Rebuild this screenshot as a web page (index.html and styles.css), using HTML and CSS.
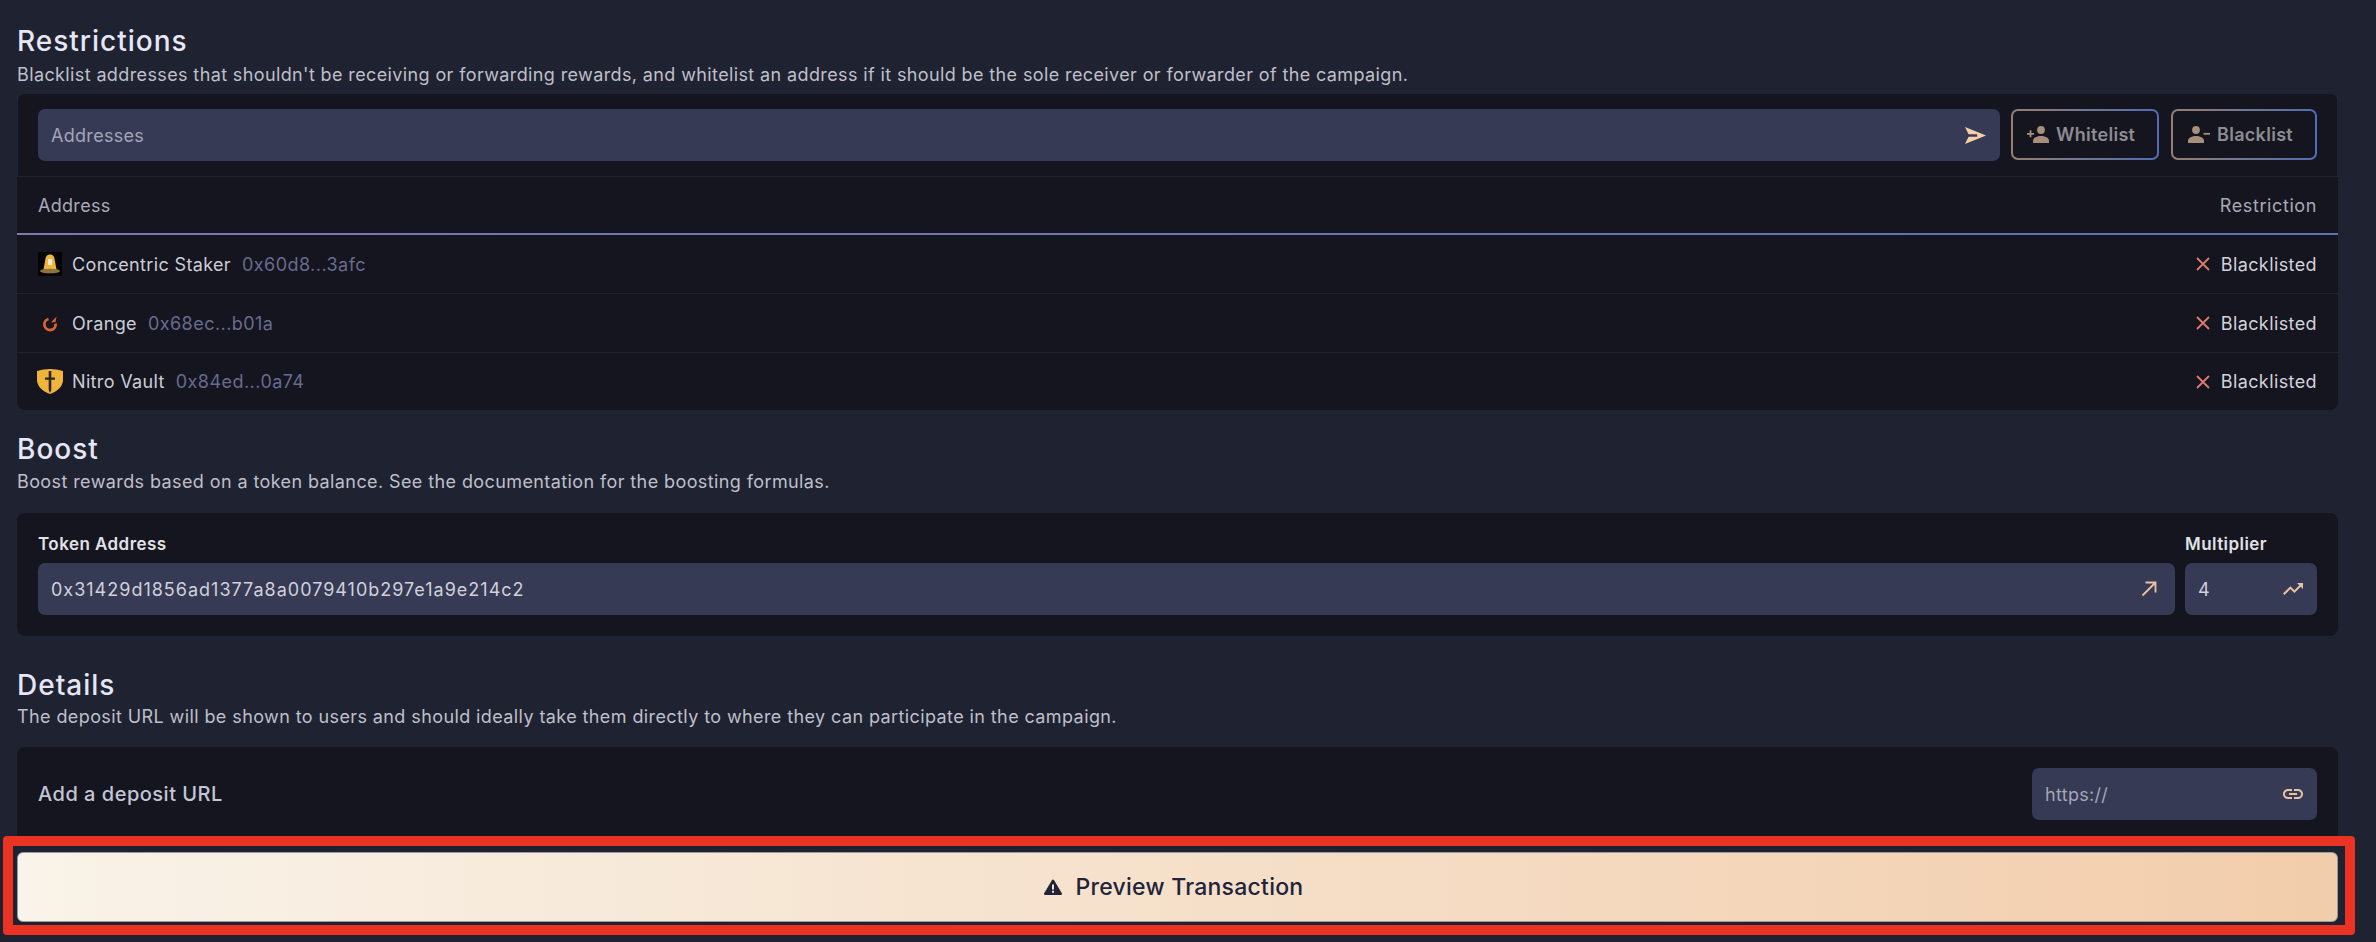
FILE: index.html
```html
<!DOCTYPE html>
<html lang="en">
<head>
  <meta charset="UTF-8">
  <title>Campaign restrictions</title>
  <link rel="stylesheet" href="styles.css">
</head>
<body>
  <main class="page">

    <!-- Restrictions -->
    <h2 class="section-title">Restrictions</h2>
    <p class="section-text tight">Blacklist addresses that shouldn't be receiving or forwarding rewards, and whitelist an address if it should be the sole receiver or forwarder of the campaign.</p>
    <section class="card restrictions">
      <div class="toolbar">
        <div class="field grow">
          <span class="placeholder">Addresses</span>
          <svg class="icon-send" viewBox="0 0 21 17"><path d="M0 0l21 8.500L0 17l3.600-7.300h8.600V7.300H3.600z"/></svg>
        </div>
        <button class="btn-outline whitelist">
          <svg class="icon-user" viewBox="0 0 22 17"><circle cx="14" cy="4" r="3.900"/><path d="M6 17v-2.200C6 11.600 10.500 10 14 10s8 1.600 8 4.800V17z"/><path d="M0 6.900h7v1.800H0zM2.600 4.300h1.800v7H2.600z"/></svg>
          Whitelist
        </button>
        <button class="btn-outline blacklist">
          <svg class="icon-user" viewBox="0 0 22 17"><circle cx="8" cy="4" r="3.900"/><path d="M0 17v-2.200C0 11.600 4.500 10 8 10s8 1.600 8 4.800V17z"/><path d="M15.500 6.900H22v1.800h-6.500z"/></svg>
          Blacklist
        </button>
      </div>
      <div class="table-head">
        <span>Address</span>
        <span class="head-right">Restriction</span>
      </div>
      <div class="table-row">
        <div class="who">
          <svg class="logo" viewBox="0 0 24 24"><rect width="24" height="24" fill="#050505"/><path d="M12 2.500c3.500 0 4.500 2.500 5 7l1.500 8h-13l1.500-8c.5-4.500 1.500-7 5-7z" fill="#f0b440"/><ellipse cx="12" cy="19" rx="10" ry="2.300" fill="#8a7440"/><path d="M10 7h4v6h-4z" fill="#fbeec4"/></svg>
          <span class="name">Concentric Staker</span>
          <span class="addr">0x60d8...3afc</span>
        </div>
        <div class="status">
          <svg class="icon-x" viewBox="0 0 14 14"><path d="M1 1l12 12M13 1L1 13"/></svg>
          Blacklisted
        </div>
      </div>
      <div class="table-row">
        <div class="who">
          <svg class="logo" viewBox="0 0 24 24"><path d="M10.500 8A5.600 5.600 0 1 0 17.500 12.500" fill="none" stroke="#de6230" stroke-width="2.800"/><path d="M18.500 5.500l-5.500 6 4.500-.5z" fill="#de6230"/></svg>
          <span class="name">Orange</span>
          <span class="addr">0x68ec...b01a</span>
        </div>
        <div class="status">
          <svg class="icon-x" viewBox="0 0 14 14"><path d="M1 1l12 12M13 1L1 13"/></svg>
          Blacklisted
        </div>
      </div>
      <div class="table-row">
        <div class="who">
          <svg class="logo logo-large" viewBox="0 0 26 25"><path d="M13 0c4 0 9 .8 13 2v9c0 6.500-6 11.500-13 14C6 22.500 0 17.500 0 11V2C4 .8 9 0 13 0z" fill="#efb43c"/><path d="M11.700 2h2.600v6.500H18v2.200h-3.700V21L13 24l-1.300-3V10.700H8V8.500h3.700z" fill="#2b2620"/></svg>
          <span class="name">Nitro Vault</span>
          <span class="addr">0x84ed...0a74</span>
        </div>
        <div class="status">
          <svg class="icon-x" viewBox="0 0 14 14"><path d="M1 1l12 12M13 1L1 13"/></svg>
          Blacklisted
        </div>
      </div>
    </section>

    <!-- Boost -->
    <h2 class="section-title">Boost</h2>
    <p class="section-text">Boost rewards based on a token balance. See the documentation for the boosting formulas.</p>
    <section class="card boost">
      <div class="boost-col grow">
        <label class="field-label">Token Address</label>
        <div class="field">
          <span class="value">0x31429d1856ad1377a8a0079410b297e1a9e214c2</span>
          <svg class="icon-line" viewBox="0 0 16 16"><path d="M1.500 14.500L14.500 1.500M4.500 1.500h10v10"/></svg>
        </div>
      </div>
      <div class="boost-col multiplier">
        <label class="field-label">Multiplier</label>
        <div class="field">
          <span class="value">4</span>
          <svg class="icon-fill" viewBox="0 0 24 24"><path d="M16 6l2.290 2.290-4.880 4.880-4-4L2 16.590 3.410 18l6-6 4 4 6.300-6.290L22 12V6z"/></svg>
        </div>
      </div>
    </section>

    <!-- Details -->
    <h2 class="section-title">Details</h2>
    <p class="section-text close">The deposit URL will be shown to users and should ideally take them directly to where they can participate in the campaign.</p>
    <section class="card details">
      <span class="details-label">Add a deposit URL</span>
      <div class="field url">
        <span class="placeholder">https://</span>
        <svg class="icon-fill" viewBox="0 0 24 24"><path d="M3.900 12c0-1.710 1.390-3.100 3.100-3.100h4V7H7c-2.760 0-5 2.240-5 5s2.240 5 5 5h4v-1.900H7c-1.710 0-3.100-1.390-3.100-3.100zM8 13h8v-2H8v2zm9-6h-4v1.900h4c1.710 0 3.100 1.390 3.100 3.100s-1.390 3.100-3.100 3.100h-4V17h4c2.760 0 5-2.240 5-5s-2.240-5-5-5z"/></svg>
      </div>
    </section>
  </main>

  <!-- sticky footer, red frame drawn over the page -->
  <div class="preview-bar">
    <button class="btn-preview">
      <svg class="icon-warning" viewBox="0 0 24 24"><path d="M12 3c.6 0 1 .3 1.300.8l9.300 15.700c.6 1-.1 2-1.200 2H2.600c-1.100 0-1.800-1-1.200-2l9.300-15.700c.3-.5.700-.8 1.300-.8zm-1.200 6v6h2.400V9zm0 7.500v2.400h2.400v-2.400z"/></svg>
      Preview Transaction
    </button>
  </div>
</body>
</html>
```

FILE: styles.css
```css
body {
  background-color: #1f2331;
  color: #c9c9d6;
  font-family: Inter, "Liberation Sans", sans-serif;
  font-size: 18px;
  letter-spacing: 0.3px;
  margin: 0;
  height: 942px;
  overflow: hidden;
  position: relative;
}

.page {
  padding: 25px 38px 0 17px;
}

.section-title {
  color: #e6e6f4;
  font-size: 28px;
  font-weight: 500;
  letter-spacing: 1px;
  line-height: 32px;
  margin: 0;
}

.section-text {
  color: #bfbfca;
  letter-spacing: 0.4px;
  line-height: 22px;
  margin: 6px 0 20px;
}

.section-text.tight {
  letter-spacing: 0.38px;
  margin: 7px 0 8px;
}

.section-text.close {
  margin: 5px 0 19px;
}

.card {
  background-color: #14151f;
  border-radius: 8px;
}

.restrictions {
  margin-bottom: 23px;
}

.boost {
  margin-bottom: 33px;
}

.grow {
  flex: 1;
}

/* inputs */
.field {
  align-items: center;
  background-color: #363a54;
  border-radius: 7px;
  box-sizing: border-box;
  display: flex;
  height: 52px;
  justify-content: space-between;
  padding: 0 14px 0 13px;
}

.placeholder {
  color: #a3a5b8;
}

.value {
  color: #d0d1dc;
  letter-spacing: 1px;
}

.icon-send {
  fill: #f5d0ab;
  height: 17px;
  width: 21px;
}

.icon-fill {
  fill: #e6c3a3;
  height: 24px;
  margin-right: -2px;
  width: 24px;
}

.icon-line {
  fill: none;
  height: 16px;
  margin-right: 4px;
  stroke: #e6c3a3;
  stroke-width: 1.800;
  width: 16px;
}

/* restrictions */
.toolbar {
  border-bottom: 1px solid #1d2130;
  border-left: 1px solid #20263a;
  border-right: 1px solid #20263a;
  box-sizing: border-box;
  display: flex;
  gap: 10px;
  height: 83px;
  padding: 15px 20px 0;
}

.btn-outline {
  align-items: center;
  background: linear-gradient(#14151f, #14151f) padding-box,
    linear-gradient(90deg, #957f70, #4f6db4) border-box;
  border: 2px solid transparent;
  border-radius: 7px;
  box-sizing: border-box;
  color: #8d8c91;
  display: flex;
  font-family: inherit;
  font-size: 18px;
  font-weight: 600;
  gap: 7px;
  height: 51px;
  letter-spacing: 0.3px;
  padding: 0 0 0 14px;
}

.whitelist {
  margin-left: 1px;
  width: 148px;
}

.blacklist {
  margin-left: 2px;
  padding-left: 15px;
  width: 146px;
}

.icon-user {
  fill: #a78f7a;
  flex: none;
  height: 17px;
  width: 22px;
}

.table-head {
  align-items: center;
  border-bottom: 2px solid;
  border-image: linear-gradient(90deg, #7d78ae, #5c72b5) 1;
  color: #a9aab6;
  display: flex;
  height: 58px;
  box-sizing: border-box;
  justify-content: space-between;
  padding: 0 21px;
}

.head-right {
  letter-spacing: 0.6px;
}

.table-row {
  align-items: center;
  border-bottom: 1px solid #1d2130;
  box-sizing: border-box;
  display: flex;
  height: 59px;
  justify-content: space-between;
  padding: 0 21px;
}

.table-row:last-child {
  border-bottom: none;
  height: 57px;
}

.who {
  align-items: center;
  display: flex;
}

.logo {
  flex: none;
  height: 24px;
  margin-right: 10px;
  width: 24px;
}

.logo-large {
  height: 25px;
  margin-left: -1px;
  margin-right: 9px;
  width: 26px;
}

.name {
  color: #cdcdd6;
  letter-spacing: 0.35px;
  margin-right: 11px;
}

.addr {
  color: #686b8e;
  letter-spacing: 0.45px;
}

.status {
  align-items: center;
  color: #d2d2da;
  display: flex;
  gap: 11px;
  letter-spacing: 0.4px;
}

.icon-x {
  fill: none;
  height: 14px;
  stroke: #e07a6c;
  stroke-width: 1.800;
  width: 14px;
}

/* boost */
.boost {
  display: flex;
  gap: 10px;
  padding: 20px 21px 21px;
}

.boost-col {
  display: flex;
  flex-direction: column;
}

.multiplier {
  width: 132px;
}

.field-label {
  color: #e2e2e6;
  font-size: 17px;
  font-weight: 600;
  letter-spacing: 0.45px;
  line-height: 22px;
  margin-bottom: 8px;
}

/* details */
.details {
  align-items: center;
  display: flex;
  height: 120px;
  justify-content: space-between;
  padding: 21px 21px 47px;
  box-sizing: border-box;
}

.details-label {
  color: #c5c5d5;
  font-size: 20px;
  font-weight: 500;
  letter-spacing: 0.5px;
}

.url {
  width: 285px;
}

/* footer */
.preview-bar {
  background-color: #1f2331;
  border: 10px solid #ea3323;
  border-radius: 4px;
  box-sizing: border-box;
  height: 99px;
  left: 3px;
  padding: 6px 7px 4px 4px;
  position: absolute;
  right: 21px;
  top: 836px;
}

.btn-preview {
  align-items: center;
  background: linear-gradient(90deg, #f9f3e9, #f2cdab);
  border: 1px solid #9b9aa0;
  border-radius: 6px;
  color: #20233a;
  display: flex;
  font-family: inherit;
  font-size: 23px;
  font-weight: 500;
  gap: 13px;
  height: 70px;
  justify-content: center;
  letter-spacing: 0.25px;
  width: 100%;
  padding: 0 9px 0 0;
}

.icon-warning {
  fill: #20233a;
  height: 20px;
  width: 20px;
}
```
